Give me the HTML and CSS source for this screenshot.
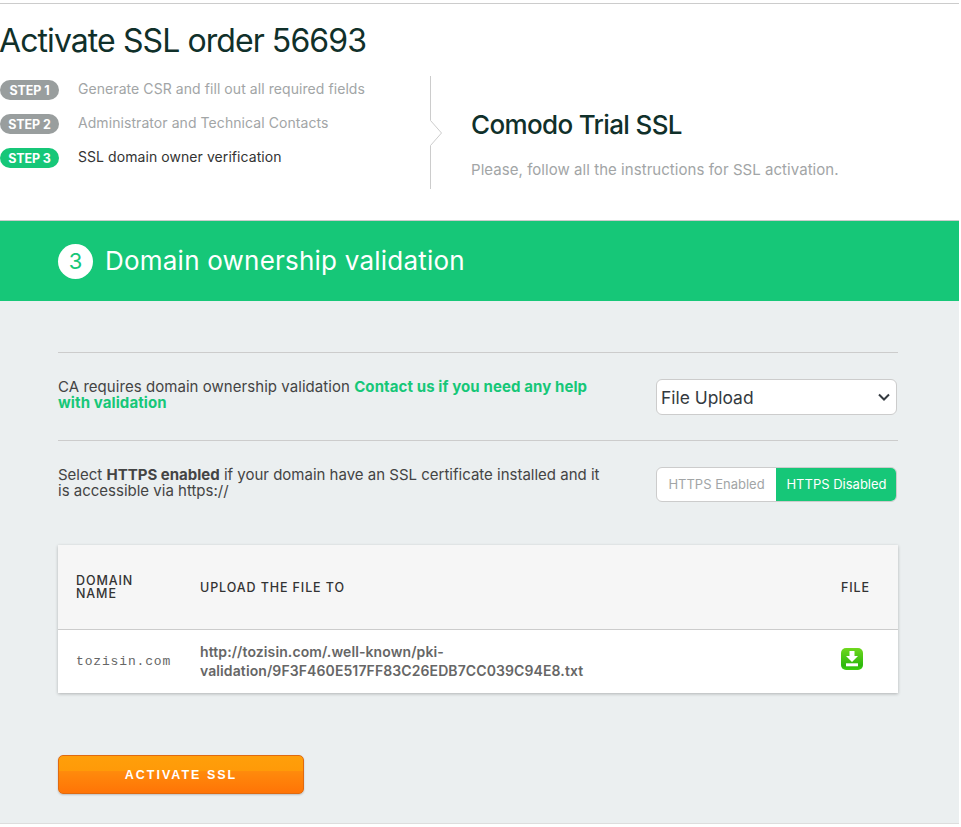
FILE: index.html
```html
<!DOCTYPE html>
<html lang="en">
<head>
<meta charset="utf-8">
<title>Activate SSL order 56693</title>
<link rel="stylesheet" href="styles.css">
</head>
<body>
<div class="page">
  <header class="top">
    <h1>Activate SSL order 56693</h1>
    <div class="summary">
      <ul class="steps">
        <li class="step"><span class="pill">STEP 1</span><span class="step-text">Generate CSR and fill out all required fields</span></li>
        <li class="step"><span class="pill">STEP 2</span><span class="step-text">Administrator and Technical Contacts</span></li>
        <li class="step current"><span class="pill">STEP 3</span><span class="step-text">SSL domain owner verification</span></li>
      </ul>
      <svg class="divider" width="12" height="113" viewBox="0 0 12 113" aria-hidden="true"><path d="M.5 0V44.500L11.500 57 .5 69.500V113" fill="none" stroke="#ccc"/></svg>
      <div class="product">
        <h2>Comodo Trial SSL</h2>
        <p>Please, follow all the instructions for SSL activation.</p>
      </div>
    </div>
  </header>
  <section class="band"><span class="num">3</span><h3>Domain ownership validation</h3></section>
  <main class="content">
    <div class="row row-first">
      <p class="row-text">CA requires domain ownership validation <a href="#">Contact us if you need any help with validation</a></p>
      <div class="select"><span>File Upload</span>
        <svg width="12" height="8" viewBox="0 0 12 8" aria-hidden="true"><path d="M1 1.500l5 5 5-5" fill="none" stroke="#343a40" stroke-width="2"/></svg>
      </div>
    </div>
    <div class="row row-second">
      <p class="row-text">Select <b>HTTPS enabled</b> if your domain have an SSL certificate installed and it is accessible via https://</p>
      <div class="toggle"><span class="opt">HTTPS Enabled</span><span class="opt on">HTTPS Disabled</span></div>
    </div>
    <div class="table">
      <div class="thead">
        <span class="c1">DOMAIN NAME</span><span class="c2">UPLOAD THE FILE TO</span><span class="c3">FILE</span>
      </div>
      <div class="tbody">
        <span class="c1 domain">tozisin.com</span>
        <span class="c2 url">http://tozisin.com/.well-known/pki-validation/9F3F460E517FF83C26EDB7CC039C94E8.txt</span>
        <span class="c3">
          <svg class="dl" width="22" height="22" viewBox="0 0 22 22" aria-hidden="true">
            <defs><linearGradient id="g" x1="0" y1="0" x2="0" y2="1"><stop offset="0" stop-color="#6fd81e"/><stop offset=".8" stop-color="#2db80c"/><stop offset="1" stop-color="#3ed30f"/></linearGradient></defs>
            <rect width="22" height="22" rx="5" fill="url(#g)"/>
            <path d="M8.500 3h5v5h3.500l-6 6-6-6h3.500z" fill="#fff"/>
            <rect x="5" y="15.300" width="12" height="3" fill="#fff"/>
          </svg>
        </span>
      </div>
    </div>
    <button class="activate" type="button">ACTIVATE SSL</button>
  </main>
</div>
</body>
</html>
```
FILE: styles.css
```css
* { box-sizing: border-box; }
html, body { margin: 0; padding: 0; background: #fff; }
body { font-family: Inter, "Noto Sans", sans-serif; color: #444; }
.page { width: 959px; padding-top: 3px; }
.top { border-top: 1px solid #ccc; border-bottom: 1px solid #ccc; height: 218px; }
h1 { margin: 0 0 0 -1px; padding-top: 16px; font-size: 32px; line-height: 42px; font-weight: 400; color: #10302a; letter-spacing: -.92px; }
.summary { display: flex; margin-top: 14px; }
.steps { list-style: none; margin: 0; padding: 4px 0 0; width: 430px; }
.step { display: flex; height: 34px; align-items: flex-start; }
.pill { width: 59px; height: 20px; border-radius: 10px; background: #999e9e; color: #fff; font-size: 12.500px; font-weight: 700; line-height: 21px; text-align: center; letter-spacing: -.1px; }
.step-text { margin-left: 19px; font-size: 14px; line-height: 18px; color: #a2a5a6; letter-spacing: .07px; }
.current .pill { background: #16c778; }
.current .step-text { color: #333; }
.product { margin-left: 29px; padding-top: 33px; }
h2 { margin: 0; font-size: 26px; line-height: 32px; font-weight: 500; color: #10302a; letter-spacing: -.65px; }
.product p { margin: 19px 0 0; font-size: 15px; line-height: 20px; color: #a2a5a6; letter-spacing: .05px; }
.band { height: 80px; background: #16c778; display: flex; align-items: center; padding-left: 58px; color: #fff; }
.num { width: 35px; height: 35px; border-radius: 50%; background: #fff; color: #16c778; font-size: 22px; line-height: 35px; text-align: center; }
h3 { margin: -2px 0 0 12px; font-size: 26px; font-weight: 400; letter-spacing: .22px; }
.content { background: #ebeff0; height: 523px; padding: 51px 61px 0 58px; border-bottom: 1px solid #ddd; }
.row { display: flex; justify-content: space-between; align-items: center; border-top: 1px solid #ccc; padding-right: 1px; }
.row-first { height: 88px; }
.row-first .row-text { width: 545px; margin-top: -4px; letter-spacing: .05px; }
.row-second { height: 105px; padding-bottom: 17px; }
.row-second .row-text { width: 550px; margin-top: -4px; }
.row-text { margin: 0; font-size: 15px; line-height: 16px; color: #444; }
.row-text a { color: #16c778; font-weight: 700; text-decoration: none; letter-spacing: .1px; }
.select { width: 241px; height: 36px; background: #fff; border: 1px solid #ccc; border-radius: 6px; display: flex; justify-content: space-between; align-items: center; padding: 2px 6px 0 4px; font-size: 17.400px; color: #343a40; }
.select svg { margin-top: -2px; }
.toggle { display: flex; width: 241px; height: 35px; font-size: 13px; border-radius: 6px; overflow: hidden; border: 1px solid #ccc; background: #fff; }
.opt { width: 119px; line-height: 33px; text-align: center; color: #a2a5a6; }
.opt.on { flex: 1; background: #16c778; color: #fff; margin: -1px -1px -1px 0; line-height: 35px; }
.table { background: #fff; box-shadow: 0 1px 3px rgba(0,0,0,.25); }
.thead, .tbody { display: flex; align-items: center; }
.thead { height: 85px; background: #f6f6f6; border-bottom: 1px solid #ccc; font-size: 12.500px; line-height: 13px; letter-spacing: .9px; color: #333; font-weight: 500; }
.thead .c1 { padding-right: 50px; }
.tbody { height: 63px; }
.c1 { width: 142px; padding: 0 18px; }
.c2 { width: 641px; padding-right: 250px; }
.c3 { width: 57px; }
.domain { font-family: "Liberation Mono", monospace; font-size: 13px; color: #666; letter-spacing: .85px; padding: 0 0 0 18px; }
.url { margin-top: -2px; font-size: 14px; line-height: 19px; font-weight: 600; color: #666; letter-spacing: .1px; }
.dl { display: block; margin-bottom: 6px; }
.activate { display: block; margin-top: 62px; width: 246px; height: 39px; border: 1px solid #e06a10; border-radius: 5px; background: linear-gradient(#ff9f0a 0, #ff9a08 40%, #ff8a0c 42%, #ff7406 100%); color: #fff; font: 700 12.500px "Liberation Sans", sans-serif; letter-spacing: 2px; box-shadow: 0 1px 2px rgba(0,0,0,.2); }
```
